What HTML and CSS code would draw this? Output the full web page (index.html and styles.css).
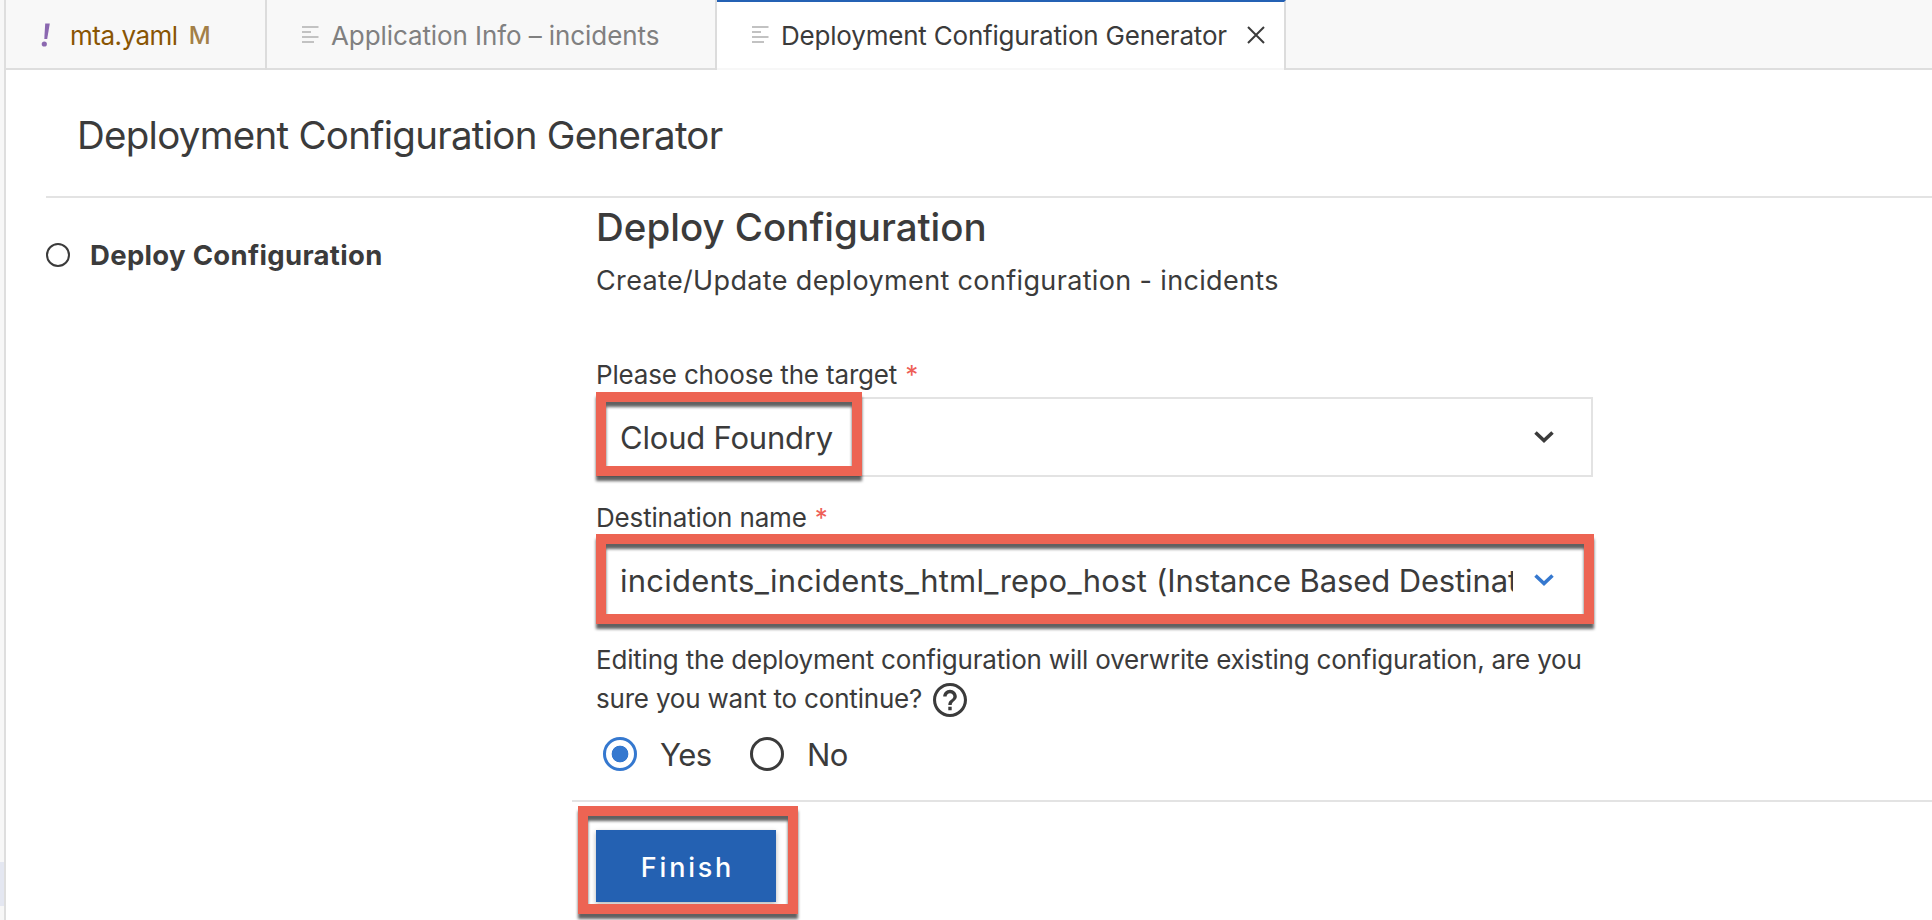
FILE: index.html
```html
<!DOCTYPE html>
<html lang="en">
<head>
<meta charset="utf-8">
<title>Deployment Configuration Generator</title>
<link rel="stylesheet" href="styles.css">
</head>
<body>
<div class="app">
  <div class="sidebar-edge"><div class="sidebar-selection"></div></div>
  <div class="editor">
    <div class="tabs">
      <div class="tab tab-yaml">
        <svg class="bang" width="10" height="24" viewBox="0 0 10 24"><path d="M4.2 0.5h4.6L6.2 16H3.3z"/><circle cx="3.3" cy="21" r="2.6"/></svg>
        <span class="t yaml-name">mta.yaml</span><span class="t yaml-state">M</span>
      </div>
      <div class="tab tab-info">
        <svg class="lines" width="17" height="18" viewBox="0 0 17 18"><path d="M0 1h16.5M0 6h9M0 11h16.5M0 16h12"/></svg>
        <span class="t info-name">Application Info – incidents</span>
      </div>
      <div class="tab tab-active">
        <svg class="lines" width="17" height="18" viewBox="0 0 17 18"><path d="M0 1h16.5M0 6h9M0 11h16.5M0 16h12"/></svg>
        <span class="t active-name">Deployment Configuration Generator</span>
        <svg class="close" width="18" height="18" viewBox="0 0 18 18"><path d="M1 1l16 16M17 1L1 17"/></svg>
      </div>
    </div>
    <header class="header"><h1 class="t title">Deployment Configuration Generator</h1></header>
    <div class="body">
      <nav class="steps">
        <div class="step"><span class="step-dot"></span><span class="t step-name">Deploy Configuration</span></div>
      </nav>
      <main class="content">
        <section class="form">
          <h2><span class="t heading">Deploy Configuration</span></h2>
          <p class="sub"><span class="t subtitle">Create/Update deployment configuration - incidents</span></p>
          <div class="label label-target"><span class="t label-text">Please choose the target</span><span class="star">*</span></div>
          <div class="select">
            <span class="value value-target">Cloud Foundry</span>
            <svg class="chevron" width="20" height="12" viewBox="0 0 20 12"><path d="M1.5 1.5L10 9.5l8.5-8"/></svg>
            <div class="mark mark-target"></div>
          </div>
          <div class="label label-dest"><span class="t label-text">Destination name</span><span class="star">*</span></div>
          <div class="select select-focus">
            <span class="value"><span class="dest-id">incidents_incidents_html_repo_host </span><span class="dest-kind">(Instance Based Destination)</span></span>
            <svg class="chevron" width="20" height="12" viewBox="0 0 20 12"><path d="M1.5 1.5L10 9.5l8.5-8"/></svg>
            <div class="mark mark-dest"></div>
          </div>
          <div class="question">
            <div class="qline"><span class="t">Editing the deployment configuration will overwrite existing configuration, are you</span></div>
            <div class="qline"><span class="t">sure you want to continue?</span>
              <svg class="help" width="34" height="34" viewBox="2 2 20 20"><path d="M11 18h2v-2h-2v2zm1-16C6.480 2 2 6.480 2 12s4.480 10 10 10 10-4.480 10-10S17.520 2 12 2zm0 18.200c-4.520 0-8.200-3.680-8.200-8.200s3.680-8.200 8.200-8.200 8.200 3.680 8.200 8.200-3.680 8.200-8.200 8.200zM12 6c-2.210 0-4 1.790-4 4h2c0-1.100.9-2 2-2s2 .9 2 2c0 2-3 1.750-3 5h2c0-2.250 3-2.500 3-5 0-2.210-1.790-4-4-4z"/></svg>
            </div>
          </div>
          <div class="radios">
            <span class="radio radio-on"></span><span class="t yes">Yes</span>
            <span class="radio"></span><span class="t no">No</span>
          </div>
        </section>
        <footer class="footer">
          <button class="finish">Finish</button>
          <div class="mark mark-finish"></div>
        </footer>
      </main>
    </div>
  </div>
</div>
</body>
</html>
```
FILE: styles.css
```css
* { box-sizing: border-box; }
body { margin: 0; background: #fff; color: #3b3b3b; font-family: Inter, "Liberation Sans", sans-serif; }
h1, h2, p { margin: 0; font-weight: 400; }
.app { display: flex; width: 1932px; height: 920px; overflow: hidden; }
.sidebar-edge { width: 6px; flex: none; background: #f7f7f7; border-right: 2px solid #dedede; padding-top: 862px; }
.sidebar-selection { height: 44px; background: #e4e7f1; }
.editor { flex: 1; min-width: 0; display: flex; flex-direction: column; }
.t { white-space: nowrap; }

.tabs { display: flex; height: 70px; flex: none; background: linear-gradient(#dedede, #dedede) 0 68px / 100% 2px no-repeat #f8f8f8; }
.tab { display: flex; align-items: center; height: 70px; font-size: 26px; border-right: 2px solid #dcdcdc; }
.tab .t { padding-top: 1px; }
.tab-yaml { width: 261px; padding-left: 35px; color: #895503; }
.bang { fill: #8b68b0; }
.yaml-name { margin-left: 19px; letter-spacing: -0.5px; }
.yaml-state { margin-left: 11px; color: #a37f47; font-weight: 500; font-size: 24px; }
.tab-info { width: 450px; padding-left: 35px; color: #808080; }
.lines { fill: none; stroke: #c2c2c2; stroke-width: 2; }
.info-name, .active-name { margin-left: 12px; }
.info-name { letter-spacing: -0.09px; }
.active-name { letter-spacing: -0.2px; }
.tab-active { width: 569px; padding-left: 35px; background: linear-gradient(#f7f7f7, #f7f7f7) 0 100% / 100% 2px no-repeat #fff; border-top: 2px solid #2461b4; padding-bottom: 2px; }
.close { fill: none; stroke: #3b3b3b; stroke-width: 2; margin-left: auto; margin-right: 19px; }

.header { height: 128px; flex: none; margin-left: 40px; padding: 4px 0 0 31px; border-bottom: 2px solid #e3e3e3; display: flex; align-items: center; }
.title { font-size: 38.5px; letter-spacing: -0.73px; }

.body { display: flex; flex: 1; }
.steps { width: 566px; flex: none; padding: 37px 0 0 40px; }
.step { display: flex; align-items: center; height: 40px; }
.step-dot { width: 24px; height: 24px; border: 2px solid #3b3b3b; border-radius: 50%; }
.step-name { margin-left: 20px; font-size: 27.5px; font-weight: 700; letter-spacing: 0.32px; }

.content { flex: 1; min-width: 0; }
.form { width: 1021px; height: 602px; padding: 1px 0 0 24px; }
h2 { height: 56px; line-height: 56px; }
.heading { font-size: 38.5px; font-weight: 500; }
.sub { margin-top: 6px; height: 40px; line-height: 40px; font-size: 27px; letter-spacing: 0.35px; }
.label { display: flex; height: 38px; line-height: 38px; font-size: 26px; }
.label-text { letter-spacing: -0.17px; }
.label-target { margin-top: 55px; }
.label-dest { margin-top: 22px; }
.star { margin-left: 8px; color: #ee5f57; }
.select { position: relative; display: flex; align-items: center; height: 80px; margin-top: 3px; border: 2px solid #e3e3e3; padding-left: 22px; font-size: 31px; }
.value { width: 893px; overflow: hidden; white-space: pre; line-height: 44px; padding-top: 2px; }
.value-target { letter-spacing: -0.2px; }
.dest-id { letter-spacing: 0.23px; }
.dest-kind { letter-spacing: -0.13px; }
.chevron { margin-left: 21px; fill: none; stroke: #3b3b3b; stroke-width: 3.6; }
.select-focus .chevron { stroke: #3578cf; }
.question { margin-top: 20px; font-size: 26px; letter-spacing: -0.2px; }
.qline { display: flex; align-items: center; height: 39px; }
.help { margin: 3px 0 0 11px; fill: #3b3b3b; }
.radios { display: flex; align-items: center; height: 40px; margin-top: 16px; padding-left: 7px; font-size: 31px; }
.radio { width: 34px; height: 34px; border: 3px solid #3b3b3b; border-radius: 50%; }
.radio-on { border-color: #3578cf; background: radial-gradient(circle, #3578cf 8px, transparent 8.7px); }
.yes, .no { margin-left: 23px; letter-spacing: -0.5px; }
.yes { width: 90px; }

.footer { position: relative; border-top: 2px solid #e3e3e3; padding: 28px 0 0 24px; height: 120px; }
.finish { display: block; width: 180px; height: 72px; border: 0; padding: 2px 0 0 3px; background: #2461b2; color: #fff; font-family: inherit; font-size: 27px; font-weight: 500; letter-spacing: 2.8px; box-shadow: 0 2px 5px rgba(0, 0, 0, .3); }

/* Highlight frames drawn over the controls */
.mark { position: absolute; border: 10px solid #ed6453; filter: drop-shadow(0 5px 1.5px rgba(0, 0, 0, .62)); }
.mark-target { left: -2px; top: -7px; width: 266px; height: 84px; }
.mark-dest { left: -2px; top: -8px; width: 998px; height: 90px; }
.mark-finish { left: 6px; top: 4px; width: 220px; height: 108px; }
```
